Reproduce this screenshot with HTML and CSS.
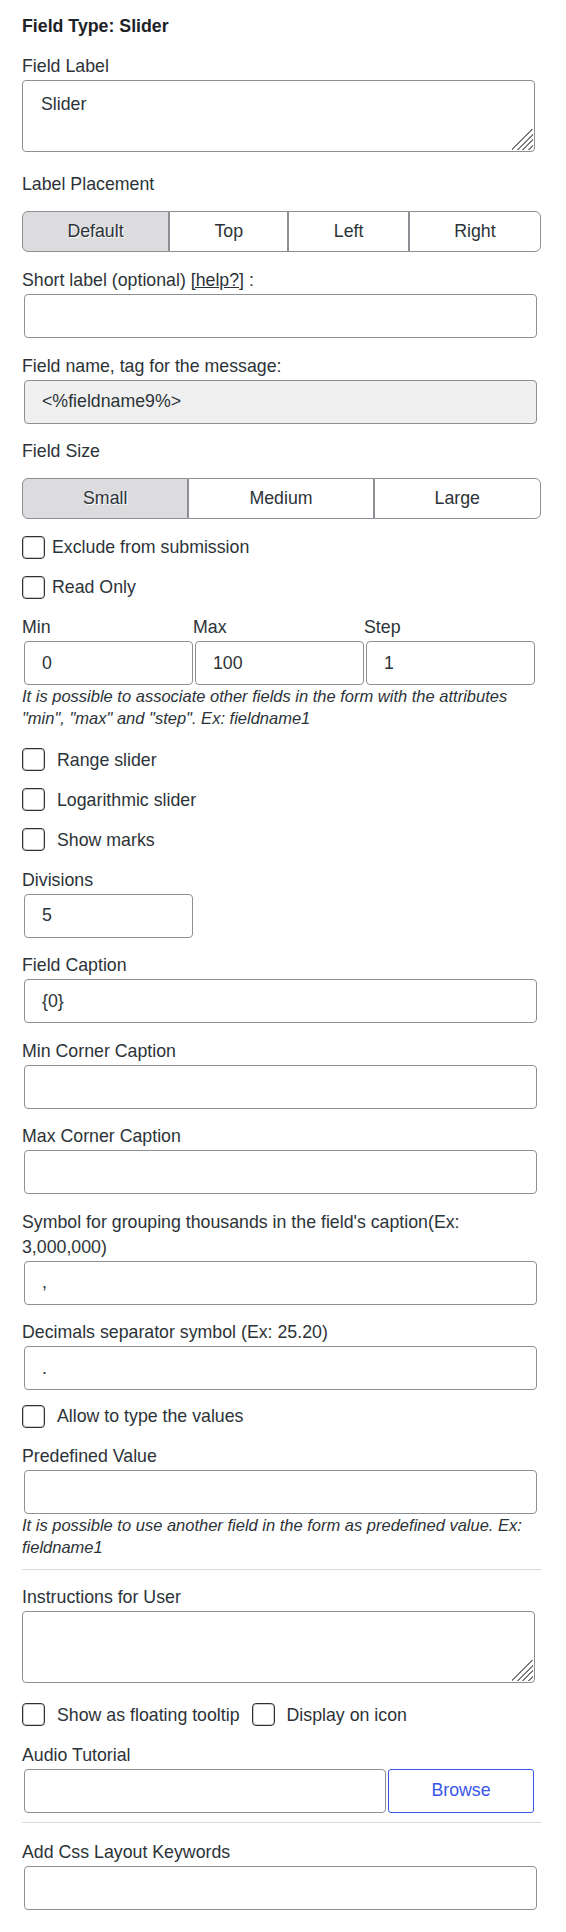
FILE: index.html
```html
<!DOCTYPE html>
<html lang="en">
<head>
<meta charset="utf-8">
<title>Field Type: Slider</title>
<link rel="stylesheet" href="styles.css">
</head>
<body>
<div class="panel">
  <div class="title">Field Type: Slider</div>

  <div class="field field-ta">
    <label class="lbl">Field Label</label>
    <div class="ta-wrap">
      <textarea class="ta">Slider</textarea>
      <span class="ta-grip"></span>
    </div>
  </div>

  <div class="field field-seg">
    <div class="lbl">Label Placement</div>
    <div class="seg">
      <button class="seg-btn is-active">Default</button>
      <button class="seg-btn">Top</button>
      <button class="seg-btn">Left</button>
      <button class="seg-btn">Right</button>
    </div>
  </div>

  <div class="field">
    <label class="lbl">Short label (optional) <a class="help-link" href="#">[help?]</a> :</label>
    <input class="inp" type="text" value="">
  </div>

  <div class="field">
    <label class="lbl">Field name, tag for the message:</label>
    <input class="inp inp-ro" type="text" value="&lt;%fieldname9%&gt;" readonly>
  </div>

  <div class="field field-seg">
    <div class="lbl">Field Size</div>
    <div class="seg">
      <button class="seg-btn is-active">Small</button>
      <button class="seg-btn">Medium</button>
      <button class="seg-btn">Large</button>
    </div>
  </div>

  <div class="chk-row">
    <input class="chk chk-tight" type="checkbox"><span>Exclude from submission</span>
  </div>
  <div class="chk-row">
    <input class="chk chk-tight" type="checkbox"><span>Read Only</span>
  </div>

  <div class="mms">
    <div class="mms-col">
      <label class="lbl">Min</label>
      <input class="inp inp-col" type="text" value="0">
    </div>
    <div class="mms-col">
      <label class="lbl">Max</label>
      <input class="inp inp-col" type="text" value="100">
    </div>
    <div class="mms-col">
      <label class="lbl">Step</label>
      <input class="inp inp-col" type="text" value="1">
    </div>
  </div>
  <div class="help help-mms">It is possible to associate other fields in the form with the attributes "min", "max" and "step". Ex: fieldname1</div>

  <div class="chk-row">
    <input class="chk" type="checkbox"><span>Range slider</span>
  </div>
  <div class="chk-row">
    <input class="chk" type="checkbox"><span>Logarithmic slider</span>
  </div>
  <div class="chk-row">
    <input class="chk" type="checkbox"><span>Show marks</span>
  </div>

  <div class="field">
    <label class="lbl">Divisions</label>
    <input class="inp inp-col" type="text" value="5">
  </div>

  <div class="field">
    <label class="lbl">Field Caption</label>
    <input class="inp" type="text" value="{0}">
  </div>

  <div class="field">
    <label class="lbl">Min Corner Caption</label>
    <input class="inp" type="text" value="">
  </div>

  <div class="field">
    <label class="lbl">Max Corner Caption</label>
    <input class="inp" type="text" value="">
  </div>

  <div class="field">
    <label class="lbl">Symbol for grouping thousands in the field's caption(Ex: 3,000,000)</label>
    <input class="inp" type="text" value=",">
  </div>

  <div class="field field-before-chk">
    <label class="lbl">Decimals separator symbol (Ex: 25.20)</label>
    <input class="inp" type="text" value=".">
  </div>

  <div class="chk-row">
    <input class="chk" type="checkbox"><span>Allow to type the values</span>
  </div>

  <div class="field field-help">
    <label class="lbl">Predefined Value</label>
    <input class="inp" type="text" value="">
    <div class="help">It is possible to use another field in the form as predefined value. Ex: fieldname1</div>
  </div>

  <hr class="sep sep-a">

  <div class="field field-ta2">
    <label class="lbl">Instructions for User</label>
    <div class="ta-wrap">
      <textarea class="ta"></textarea>
      <span class="ta-grip"></span>
    </div>
  </div>

  <div class="chk-row">
    <input class="chk" type="checkbox"><span>Show as floating tooltip</span>
    <input class="chk chk-second" type="checkbox"><span>Display on icon</span>
  </div>

  <div class="field field-audio">
    <label class="lbl">Audio Tutorial</label>
    <div class="audio-row">
      <input class="inp inp-audio" type="text" value="">
      <button class="browse">Browse</button>
    </div>
  </div>

  <hr class="sep sep-b">

  <div class="field">
    <label class="lbl">Add Css Layout Keywords</label>
    <input class="inp" type="text" value="">
  </div>
</div>
</body>
</html>
```

FILE: styles.css
```css
html, body {
  margin: 0;
  padding: 0;
  background: #ffffff;
}

body {
  font-family: "Liberation Sans", Arial, sans-serif;
  font-size: 17.75px;
  color: #2c3338;
}

.panel {
  width: 519px;
  padding: 14px 0 0 22px;
}

.title {
  font-weight: bold;
  line-height: 25px;
  color: #1d2327;
  margin-bottom: 15px;
}

.field {
  margin-bottom: 15.5px;
}

.field-ta {
  margin-bottom: 20px;
}

.field-seg {
  margin-bottom: 16px;
}

.field-before-chk {
  margin-bottom: 14px;
}

.field-help {
  margin-bottom: 10.5px;
}

.field-ta2 {
  margin-bottom: 19.5px;
}

.field-audio {
  margin-bottom: 9.5px;
}

.lbl {
  display: block;
  line-height: 25px;
  margin-bottom: 1px;
}

.help-link {
  color: #2c3338;
  text-decoration: underline;
}

.inp {
  display: block;
  box-sizing: border-box;
  width: 513px;
  height: 44px;
  margin: 0 0 0 2px;
  padding: 0 17px;
  border: 1px solid #8c8f94;
  border-radius: 4px;
  background: #ffffff;
  font-family: inherit;
  font-size: 17.75px;
  color: #2c3338;
  outline: none;
}

.inp-ro {
  background: #f0f0f1;
}

.inp-col {
  width: 169px;
}

.ta-wrap {
  position: relative;
  width: 513px;
  height: 72px;
  margin-top: 1px;
}

.ta {
  display: block;
  box-sizing: border-box;
  width: 513px;
  height: 72px;
  margin: 0;
  padding: 11px 18px;
  border: 1px solid #8c8f94;
  border-radius: 4px;
  background: #ffffff;
  font-family: inherit;
  font-size: 17.75px;
  line-height: 25px;
  color: #2c3338;
  resize: none;
  outline: none;
}

.ta-grip {
  position: absolute;
  right: 2px;
  bottom: 2px;
  width: 21px;
  height: 21px;
  pointer-events: none;
  background-image: linear-gradient(135deg,
    transparent 0 14.1px,
    #7b7b7b 14.1px 15.5px,
    transparent 15.5px 17.9px,
    #7b7b7b 17.9px 19.3px,
    transparent 19.3px 21.7px,
    #7b7b7b 21.7px 23.1px,
    transparent 23.1px 25.5px,
    #7b7b7b 25.5px 26.9px,
    transparent 26.9px);
}

.seg {
  display: flex;
  width: 519px;
  height: 41px;
  margin-top: 14px;
}

.seg-btn {
  flex: 1 1 auto;
  box-sizing: border-box;
  height: 41px;
  margin: 0;
  padding: 0;
  border: 1px solid #8c8f94;
  background: #ffffff;
  font-family: inherit;
  font-size: 17.75px;
  color: #2c3338;
  cursor: pointer;
}

.seg-btn:first-child {
  border-radius: 6px 0 0 6px;
}

.seg-btn:last-child {
  border-radius: 0 6px 6px 0;
}

.seg-btn.is-active {
  background: #dcdcde;
  text-shadow: 1px 1px 0 #ffffff;
}

.chk-row {
  display: flex;
  align-items: center;
  height: 24px;
  line-height: 24px;
  margin-bottom: 16px;
}

.chk {
  appearance: none;
  -webkit-appearance: none;
  box-sizing: border-box;
  width: 23px;
  height: 23px;
  margin: 0 12px 0 0;
  border: 1px solid #2c3338;
  border-radius: 4px;
  background: #ffffff;
  box-shadow: inset 0 0 0 1px rgba(44, 51, 56, 0.25);
  flex: none;
}

.chk-tight {
  margin-right: 7px;
}

.chk-second {
  margin-left: 12px;
}

.mms {
  display: grid;
  grid-template-columns: repeat(3, 171px);
}

.help {
  font-style: italic;
  font-size: 16.5px;
  line-height: 22px;
  color: #2c3338;
}

.help-mms {
  margin-bottom: 18.5px;
}

.sep {
  height: 1px;
  margin: 0;
  border: 0;
  background: #dcdcde;
  width: 519px;
}

.sep-a {
  margin-bottom: 15.5px;
}

.sep-b {
  margin-bottom: 17px;
}

.audio-row {
  display: flex;
  gap: 2px;
}

.inp-audio {
  width: 362px;
}

.browse {
  box-sizing: border-box;
  width: 146px;
  height: 44px;
  margin: 0;
  padding: 0;
  border: 1px solid #3858e9;
  border-radius: 3px;
  background: #ffffff;
  font-family: inherit;
  font-size: 17.75px;
  color: #3858e9;
  cursor: pointer;
}
```
